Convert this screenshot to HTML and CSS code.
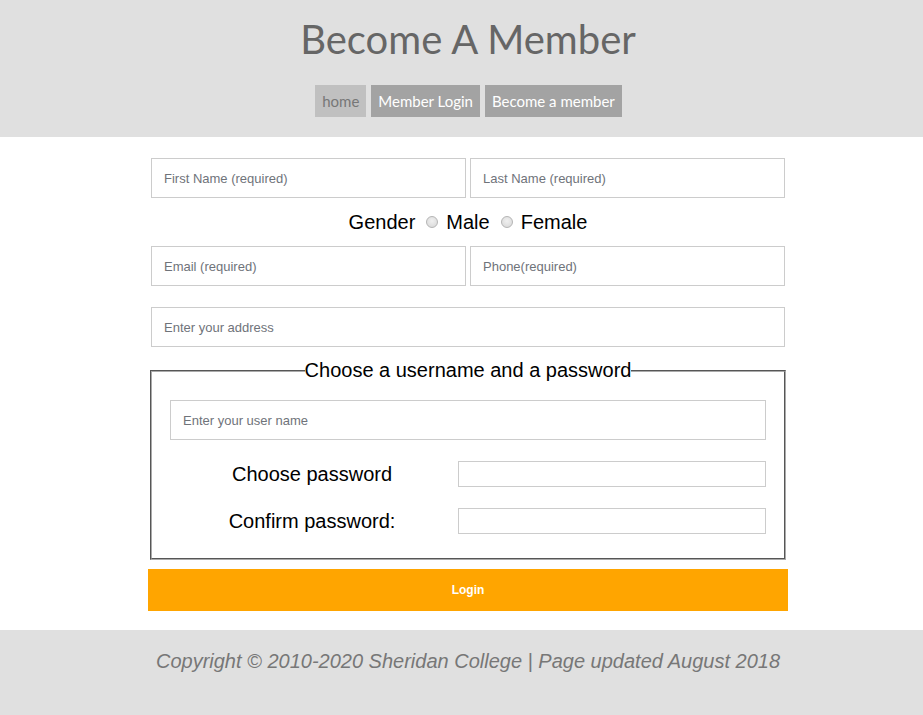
FILE: index.html
```html
<!DOCTYPE html>
<html>
<head>
<meta charset="utf-8">
<title>Become A Member</title>
<link rel="stylesheet" href="styles.css">
</head>
<body>
<header class="site-header">
  <h1 class="title">Become A Member</h1>
  <nav class="nav">
    <a class="nav-link nav-current" href="#">home</a>
    <a class="nav-link" href="#">Member Login</a>
    <a class="nav-link" href="#">Become a member</a>
  </nav>
</header>
<main class="content">
  <form class="form">
    <div class="row-two">
      <input class="field" type="text" placeholder="First Name (required)">
      <input class="field" type="text" placeholder="Last Name (required)">
    </div>
    <div class="gender">
      <span>Gender</span>
      <input class="radio" type="radio" name="g" id="male"><label for="male">Male</label>
      <input class="radio" type="radio" name="g" id="female"><label for="female">Female</label>
    </div>
    <div class="row-two">
      <input class="field" type="text" placeholder="Email (required)">
      <input class="field" type="text" placeholder="Phone(required)">
    </div>
    <div class="row-one">
      <input class="field" type="text" placeholder="Enter your address">
    </div>
    <fieldset class="account">
      <legend class="legend">Choose a username and a password</legend>
      <input class="field" type="text" placeholder="Enter your user name">
      <div class="pw-row">
        <label class="pw-label">Choose password</label>
        <input class="pw-field" type="password">
      </div>
      <div class="pw-row">
        <label class="pw-label">Confirm password:</label>
        <input class="pw-field" type="password">
      </div>
    </fieldset>
    <button class="login" type="button">Login</button>
  </form>
</main>
<footer class="site-footer">
  <p class="copy">Copyright © 2010-2020 Sheridan College | Page updated August 2018</p>
</footer>
</body>
</html>
```
FILE: styles.css
```css
* { box-sizing: border-box; }
html, body { margin: 0; padding: 0; background: #fff; }
body { font-family: "Liberation Sans", Arial, sans-serif; }

.site-header {
  background: #e0e0e0;
  height: 137px;
  padding: 15px 0 0 13px;
  text-align: center;
}
.title {
  margin: 0;
  font-family: Lato, sans-serif;
  font-weight: 400;
  font-size: 40px;
  line-height: 48px;
  color: #666;
}
.nav {
  display: flex;
  justify-content: center;
  gap: 5px;
  margin-top: 22px;
  padding-left: 1px;
}
.nav-link {
  display: block;
  height: 32px;
  line-height: 32px;
  padding: 0 7px;
  font-family: Lato, sans-serif;
  font-size: 15px;
  color: #fff;
  background: #a3a3a3;
  text-decoration: none;
}
.nav-current {
  background: #c0c0c0;
  color: #777;
}

.content {
  padding: 21px 0 19px 13px;
}
.form {
  width: 640px;
  margin: 0 auto;
}
.row-two {
  display: grid;
  grid-template-columns: 315px 315px;
  gap: 4px;
  padding: 0 3px;
}
.row-one {
  padding: 0 3px;
  margin-top: 21px;
}
.field {
  display: block;
  width: 100%;
  height: 40px;
  border: 1px solid #ccc;
  padding: 0 12px;
  font-family: "Liberation Sans", Arial, sans-serif;
  font-size: 13px;
  color: #333;
  outline: none;
}
.field::placeholder { color: #6f737a; }

.gender {
  height: 48px;
  display: flex;
  align-items: center;
  justify-content: center;
  font-size: 20px;
  color: #000;
}
.radio {
  -webkit-appearance: none;
  appearance: none;
  width: 12px;
  height: 12px;
  margin: 0 8px 0 11px;
  border-radius: 50%;
  border: 1px solid #b5b5b5;
  background: radial-gradient(circle at 50% 40%, #f0f0f0, #d6d6d6);
}

.account {
  margin: 12px 2px 9px;
  padding: 18px 18px 24px;
  border: 2px groove #aaa;
  min-width: 0;
}
.legend {
  margin: 0 auto;
  padding: 0;
  font-size: 20px;
  line-height: 23px;
  color: #000;
}
.pw-row {
  display: flex;
  align-items: center;
  margin-top: 21px;
}
.pw-label {
  width: 284px;
  text-align: center;
  font-size: 20px;
  color: #000;
}
.pw-field {
  flex: 1;
  height: 26px;
  margin-left: 4px;
  border: 1px solid #ccc;
  outline: none;
}

.login {
  display: block;
  width: 640px;
  height: 42px;
  padding-top: 1px;
  border: none;
  background: #ffa500;
  color: #fff;
  font-family: "Liberation Sans", Arial, sans-serif;
  font-weight: 700;
  font-size: 12px;
}

.site-footer {
  background: #e0e0e0;
  height: 85px;
  padding: 20px 0 0 13px;
  text-align: center;
}
.copy {
  margin: 0;
  font-size: 20px;
  font-style: italic;
  color: #777;
  line-height: 23px;
}
```
